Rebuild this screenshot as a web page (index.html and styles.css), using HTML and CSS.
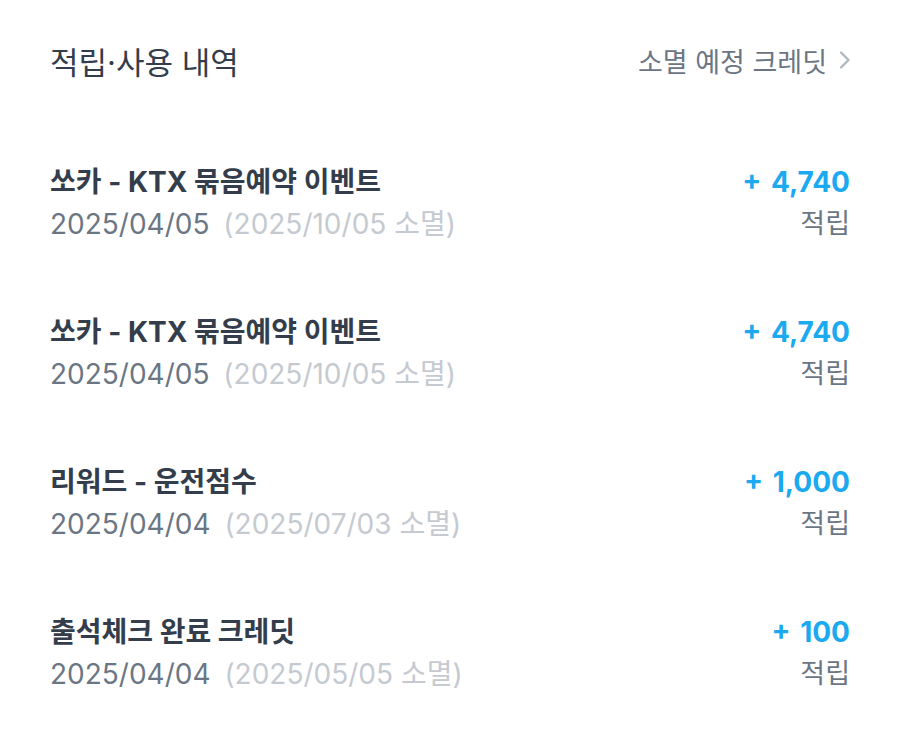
FILE: index.html
```html
<!DOCTYPE html>
<html lang="ko">
<head>
  <meta charset="UTF-8">
  <meta name="viewport" content="width=device-width, initial-scale=1.0">
  <title>적립·사용 내역</title>
  <link rel="stylesheet" href="styles.css">
</head>
<body>
  <div class="page">
    <div class="header">
      <h1>적립·사용 내역</h1>
      <a class="expire-link" href="#">소멸 예정 크레딧
        <svg class="chevron" width="16" height="24" viewBox="0 0 16 24"><path d="M4 4.5 L11.5 12 L4 19.5" fill="none" stroke="#b0b8c1" stroke-width="2.4" stroke-linecap="round" stroke-linejoin="round"/></svg>
      </a>
    </div>

    <ul class="history">
      <li class="item">
        <div class="info">
          <div class="name">쏘카 - KTX 묶음예약 이벤트</div>
          <div class="date">2025/04/05 <span class="expire">(2025/10/05 소멸)</span></div>
        </div>
        <div class="amount">
          <div class="value">+ 4,740</div>
          <div class="type">적립</div>
        </div>
      </li>
      <li class="item">
        <div class="info">
          <div class="name">쏘카 - KTX 묶음예약 이벤트</div>
          <div class="date">2025/04/05 <span class="expire">(2025/10/05 소멸)</span></div>
        </div>
        <div class="amount">
          <div class="value">+ 4,740</div>
          <div class="type">적립</div>
        </div>
      </li>
      <li class="item">
        <div class="info">
          <div class="name">리워드 - 운전점수</div>
          <div class="date">2025/04/04 <span class="expire">(2025/07/03 소멸)</span></div>
        </div>
        <div class="amount">
          <div class="value">+ 1,000</div>
          <div class="type">적립</div>
        </div>
      </li>
      <li class="item">
        <div class="info">
          <div class="name">출석체크 완료 크레딧</div>
          <div class="date">2025/04/04 <span class="expire">(2025/05/05 소멸)</span></div>
        </div>
        <div class="amount">
          <div class="value">+ 100</div>
          <div class="type">적립</div>
        </div>
      </li>
    </ul>
  </div>
</body>
</html>
```

FILE: styles.css
```css
body {
  margin: 0;
  background: #ffffff;
  font-family: Inter, "Noto Sans CJK KR", sans-serif;
  color: #333d4b;
}

.page {
  padding: 0 47px 0 50px;
}

.header {
  display: flex;
  justify-content: space-between;
  align-items: center;
  height: 120px;
}

h1 {
  margin: 0;
  font-size: 31px;
  font-weight: 400;
  color: #333d4b;
}

.expire-link {
  display: flex;
  align-items: center;
  gap: 10px;
  font-size: 27px;
  color: #6b7684;
  text-decoration: none;
}

.history {
  list-style: none;
  margin: 0;
  padding: 0 3px 0 0;
}

.item {
  display: flex;
  justify-content: space-between;
  align-items: flex-start;
  height: 150px;
  padding-top: 42px;
  box-sizing: border-box;
}

.name {
  font-size: 28px;
  font-weight: 700;
  line-height: 40px;
  color: #333d4b;
}

.date {
  font-size: 28px;
  line-height: 44px;
  color: #6b7684;
}

.expire {
  margin-left: 6px;
  color: #c5cad1;
}

.amount {
  text-align: right;
}

.value {
  font-size: 28px;
  font-weight: 700;
  line-height: 40px;
  color: #1ba9f0;
  word-spacing: 3px;
}

.type {
  font-size: 27px;
  line-height: 44px;
  color: #6b7684;
}
```
